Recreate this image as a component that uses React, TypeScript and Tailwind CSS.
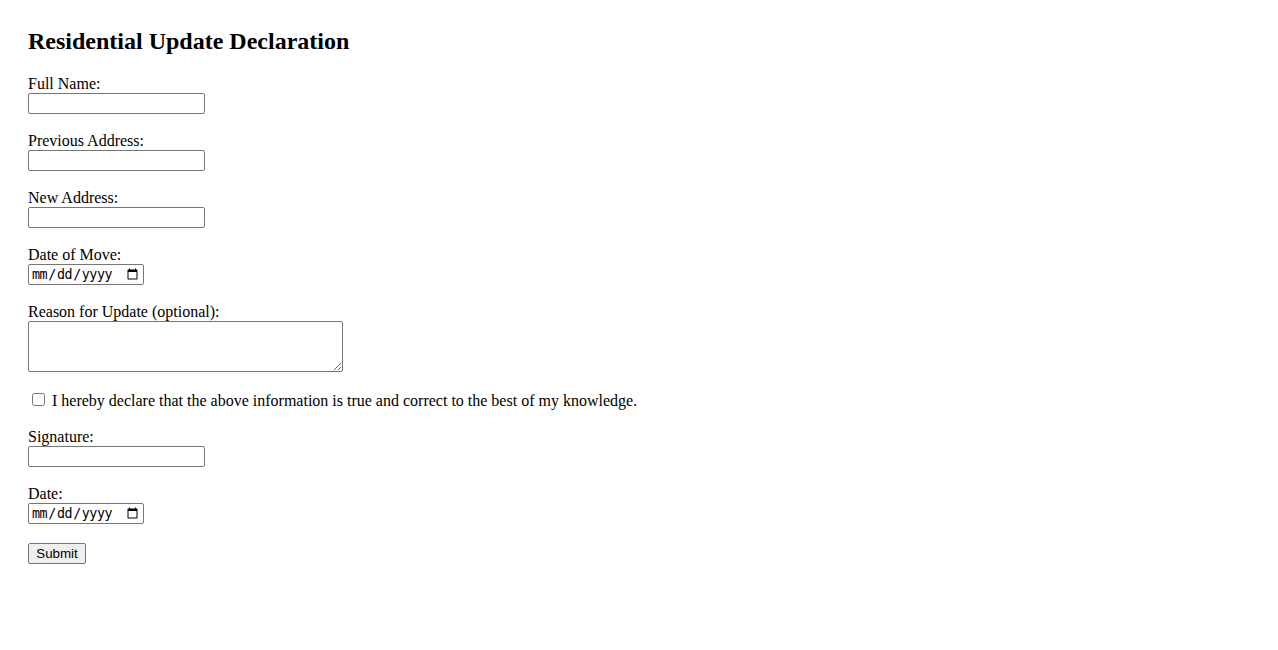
export default function App() {
  const inputCls =
    "block w-[177px] h-[21px] border border-[#767676] rounded-[2px] px-[2px] py-[1px] bg-white text-[13.333px] font-['Liberation_Sans',Arial,sans-serif] text-black";
  const dateCls =
    "block w-[116px] h-[21px] border border-[#767676] rounded-[2px] pl-[2px] pr-[2px] py-[1px] bg-white text-[13.333px] font-['DejaVu_Sans_Mono','Liberation_Mono',monospace] tracking-[-0.4px] text-black";
  const labelCls = "block h-[18px] leading-[18px]";
  return (
    <div className="min-h-[650px] bg-white text-black font-['Liberation_Serif','Times_New_Roman',serif] text-[16px] leading-[normal] pt-[27px] pl-[28px]">
      <h2 className="h-[28px] leading-[28px] text-[24px] font-bold mb-[20px]">
        Residential Update Declaration
      </h2>
      <form className="flex flex-col" onSubmit={(e) => e.preventDefault()}>
        <label className={labelCls} htmlFor="fullName">Full Name:</label>
        <input id="fullName" type="text" className={inputCls} />

        <label className={labelCls + " mt-[18px]"} htmlFor="prev">Previous Address:</label>
        <input id="prev" type="text" className={inputCls} />

        <label className={labelCls + " mt-[18px]"} htmlFor="newAddr">New Address:</label>
        <input id="newAddr" type="text" className={inputCls} />

        <label className={labelCls + " mt-[18px]"} htmlFor="moveDate">Date of Move:</label>
        <input id="moveDate" type="date" className={dateCls} />

        <label className={labelCls + " mt-[18px]"} htmlFor="reason">Reason for Update (optional):</label>
        <textarea
          id="reason"
          className="block w-[315px] h-[51px] border border-[#767676] rounded-[2px] p-[2px] bg-white resize text-[13.333px] font-['Liberation_Mono',monospace]"
        />

        <div className="mt-[19px] h-[18px] flex items-start">
          <input id="declare" type="checkbox" className="w-[13px] h-[13px] ml-[4px] mt-[2px]" />
          <label htmlFor="declare" className="ml-[7px] mt-[1px] leading-[18px]">
            I hereby declare that the above information is true and correct to the best of my knowledge.
          </label>
        </div>

        <label className={labelCls + " mt-[19px]"} htmlFor="sig">Signature:</label>
        <input id="sig" type="text" className={inputCls} />

        <label className={labelCls + " mt-[18px]"} htmlFor="date">Date:</label>
        <input id="date" type="date" className={dateCls} />

        <div className="mt-[19px]">
          <button
            type="submit"
            className="w-[58px] h-[21px] bg-[#efefef] border border-[#767676] rounded-[2px] text-[13.333px] leading-[19px] font-['Liberation_Sans',Arial,sans-serif] text-black text-center"
          >
            Submit
          </button>
        </div>
      </form>
    </div>
  );
}
